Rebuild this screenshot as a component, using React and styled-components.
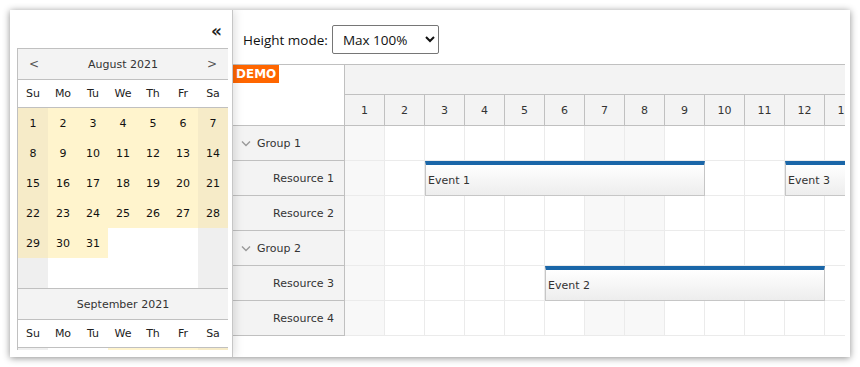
import styled, { createGlobalStyle } from "styled-components";

const GlobalStyle = createGlobalStyle`
  html, body {
    margin: 0;
    padding: 0;
    background: #fff;
  }
  body {
    padding: 10px;
    font-family: "DejaVu Sans", Tahoma, sans-serif;
  }
`;

const Frame = styled.div`
  width: 840px;
  height: 347px;
  display: flex;
  background: #fff;
  box-shadow: 0 1px 7px rgba(0, 0, 0, 0.45);
  overflow: hidden;
`;

const Side = styled.div`
  width: 223px;
  flex: none;
  box-sizing: border-box;
  border-right: 1px solid #c6c6c6;
  padding: 0 4px 7px 7px;
  display: flex;
  flex-direction: column;
  position: relative;
  z-index: 1;
  box-shadow: 2px 0 9px rgba(0, 0, 0, 0.13);
  background: #fff;
`;

const ToggleRow = styled.div`
  height: 38px;
  flex: none;
  display: flex;
  justify-content: flex-end;
  align-items: center;
  padding-right: 6px;
`;

const Toggle = styled.span`
  font-family: "DejaVu Sans", sans-serif;
  font-size: 17px;
  font-weight: bold;
  color: #222;
  line-height: 1;
  margin-top: 4px;
`;

const NavScroll = styled.div`
  flex: 1;
  overflow: hidden;
`;

const Calendar = styled.div`
  width: 212px;
  box-sizing: border-box;
  border: 1px solid #c0c0c0;
  font-size: 11px;
  color: #222;
`;

const Month = styled.div`
  & + & {
    border-top: 1px solid #c0c0c0;
  }
`;

const MonthTitle = styled.div`
  height: 30px;
  background: #f3f3f3;
  border-bottom: 1px solid #c0c0c0;
  display: flex;
  align-items: center;
  justify-content: space-between;
  padding: 0 11px;
  color: #333;
`;

const Arrow = styled.span`
  width: 10px;
  text-align: center;
  color: #555;
  font-size: 12px;
`;

const DayNames = styled.div`
  height: 27px;
  display: grid;
  grid-template-columns: repeat(7, 30px);
  border-bottom: 1px solid #c0c0c0;
  align-items: center;
  text-align: center;
`;

const Days = styled.div`
  display: grid;
  grid-template-columns: repeat(7, 30px);
  grid-auto-rows: 30px;
`;

const Day = styled.div`
  display: flex;
  align-items: center;
  justify-content: center;
  background: ${(p) =>
    p.$empty
      ? p.$weekend
        ? "#efefef"
        : "#fff"
      : p.$weekend
      ? "#f6ebc8"
      : "#fff4cd"};
  color: #111;
`;

const Main = styled.div`
  flex: 1;
  min-width: 0;
  padding-right: 5px;
  display: flex;
  flex-direction: column;
`;

const Toolbar = styled.div`
  height: 54px;
  box-sizing: border-box;
  padding: 15px 0 10px 10px;
  display: flex;
  align-items: center;
  gap: 4px;
`;

const Label = styled.label`
  font-family: "Open Sans", "Noto Sans", sans-serif;
  font-size: 13.5px;
  color: #111;
`;

const Select = styled.select`
  width: 107px;
  height: 29px;
  box-sizing: border-box;
  border: 1px solid #767676;
  border-radius: 2px;
  background: #fff;
  font-family: "Open Sans", "Noto Sans", sans-serif;
  font-size: 13.5px;
  color: #111;
  padding: 0 4px 0 6px;
`;

const Scheduler = styled.div`
  display: grid;
  grid-template-columns: 112px 1fr;
  border-top: 1px solid #c0c0c0;
  font-size: 11px;
  color: #333;
  overflow: hidden;
`;

const Corner = styled.div`
  height: 61px;
  box-sizing: border-box;
  border-right: 1px solid #c0c0c0;
  border-bottom: 1px solid #c0c0c0;
  background: #fff;
  display: flex;
  align-items: flex-start;
`;

const Demo = styled.span`
  background: #ff6600;
  color: #fff;
  font-weight: bold;
  font-size: 12px;
  padding: 1px 3px;
  line-height: 16px;
`;

const TimeHeader = styled.div`
  display: flex;
  flex-direction: column;
  overflow: hidden;
`;

const HeaderBand = styled.div`
  height: 30px;
  box-sizing: border-box;
  background: #f3f3f3;
  border-bottom: 1px solid #c0c0c0;
`;

const HeaderCells = styled.div`
  display: flex;
  height: 31px;
  box-sizing: border-box;
  border-bottom: 1px solid #c0c0c0;
  background: #f3f3f3;
`;

const HeaderCell = styled.div`
  width: 40px;
  flex: none;
  box-sizing: border-box;
  border-right: 1px solid #c0c0c0;
  display: flex;
  align-items: center;
  justify-content: center;
`;

const RowHeaders = styled.div`
  border-right: 1px solid #c0c0c0;
  background: #f3f3f3;
`;

const RowHeader = styled.div`
  height: 35px;
  box-sizing: border-box;
  border-bottom: 1px solid #c0c0c0;
  display: flex;
  align-items: center;
  justify-content: ${(p) => (p.$group ? "flex-start" : "flex-end")};
  padding: ${(p) => (p.$group ? "1px 0 0 8px" : "1px 10px 0 0")};
  gap: 6px;
`;

const Grid = styled.div`
  overflow: hidden;
`;

const Row = styled.div`
  height: 35px;
  display: flex;
  position: relative;
`;

const Cell = styled.div`
  width: 40px;
  flex: none;
  box-sizing: border-box;
  border-right: 1px solid #ebebeb;
  border-bottom: 1px solid #ebebeb;
  background: ${(p) => (p.$weekend ? "#f8f8f8" : "#fff")};
`;

const Event = styled.div`
  position: absolute;
  top: 0;
  height: 35px;
  box-sizing: border-box;
  border: 1px solid #c6c6c6;
  border-top: 4px solid #1a66a8;
  background: linear-gradient(#fff, #ededed);
  display: flex;
  align-items: center;
  padding-left: 2px;
  color: #333;
  white-space: nowrap;
`;

const Chevron = () => (
  <svg width="10" height="7" viewBox="0 0 10 7">
    <polyline points="1,1.5 5,5.5 9,1.5" fill="none" stroke="#9a9a9a" strokeWidth="1.4" />
  </svg>
);

const dayNames = ["Su", "Mo", "Tu", "We", "Th", "Fr", "Sa"];

function buildDays(offset, count, weeks) {
  const cells = [];
  for (let i = 0; i < weeks * 7; i++) {
    const d = i - offset + 1;
    cells.push({ d: d >= 1 && d <= count ? d : null, weekend: i % 7 === 0 || i % 7 === 6 });
  }
  return cells;
}

// only the first week of September peeks out below the fold
const months = [
  { title: "August 2021", arrows: true, days: buildDays(0, 31, 6) },
  { title: "September 2021", arrows: false, days: buildDays(3, 30, 1) },
];

const resources = [
  { name: "Group 1", group: true },
  { name: "Resource 1", events: [{ text: "Event 1", start: 3, days: 7 }, { text: "Event 3", start: 12, days: 7 }] },
  { name: "Resource 2" },
  { name: "Group 2", group: true },
  { name: "Resource 3", events: [{ text: "Event 2", start: 6, days: 7 }] },
  { name: "Resource 4" },
];

const columns = Array.from({ length: 13 }, (_, i) => i + 1);
const isWeekend = (d) => d % 7 === 1 || d % 7 === 0;

export default function App() {
  return (
    <>
      <GlobalStyle />
      <Frame>
        <Side>
          <ToggleRow>
            <Toggle>«</Toggle>
          </ToggleRow>
          <NavScroll>
            <Calendar>
              {months.map((m) => (
                <Month key={m.title}>
                  <MonthTitle>
                    <Arrow>{m.arrows ? "<" : ""}</Arrow>
                    <span>{m.title}</span>
                    <Arrow>{m.arrows ? ">" : ""}</Arrow>
                  </MonthTitle>
                  <DayNames>
                    {dayNames.map((n) => (
                      <span key={n}>{n}</span>
                    ))}
                  </DayNames>
                  <Days>
                    {m.days.map((c, i) => (
                      <Day key={i} $empty={!c.d} $weekend={c.weekend}>
                        {c.d}
                      </Day>
                    ))}
                  </Days>
                </Month>
              ))}
            </Calendar>
          </NavScroll>
        </Side>
        <Main>
          <Toolbar>
            <Label>Height mode:</Label>
            <Select defaultValue="max">
              <option value="max">Max 100%</option>
              <option value="auto">Auto</option>
              <option value="fixed">Fixed</option>
            </Select>
          </Toolbar>
          <Scheduler>
            <Corner>
              <Demo>DEMO</Demo>
            </Corner>
            <TimeHeader>
              <HeaderBand />
              <HeaderCells>
                {columns.map((c) => (
                  <HeaderCell key={c}>{c}</HeaderCell>
                ))}
              </HeaderCells>
            </TimeHeader>
            <RowHeaders>
              {resources.map((r) => (
                <RowHeader key={r.name} $group={r.group}>
                  {r.group && <Chevron />}
                  {r.name}
                </RowHeader>
              ))}
            </RowHeaders>
            <Grid>
              {resources.map((r) => (
                <Row key={r.name}>
                  {columns.map((c) => (
                    <Cell key={c} $weekend={isWeekend(c)} />
                  ))}
                  {(r.events || []).map((e) => (
                    <Event key={e.text} style={{ left: (e.start - 1) * 40, width: e.days * 40 }}>
                      {e.text}
                    </Event>
                  ))}
                </Row>
              ))}
            </Grid>
          </Scheduler>
        </Main>
      </Frame>
    </>
  );
}
